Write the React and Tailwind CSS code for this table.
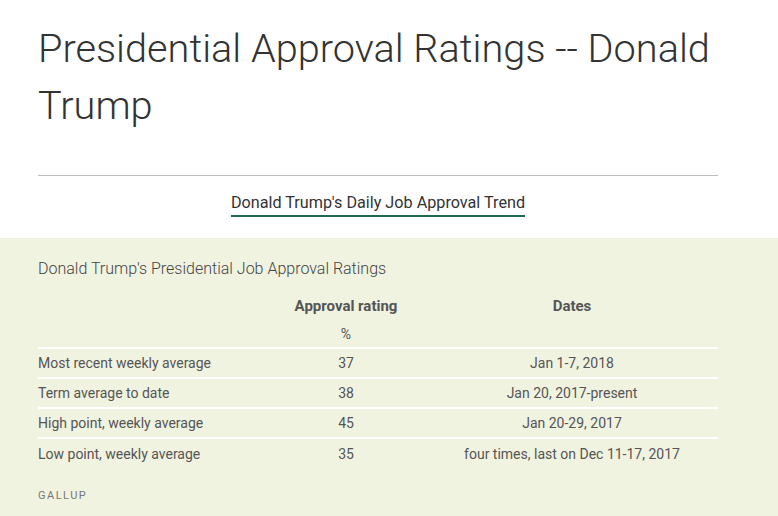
import React from "react";

const rows = [
  ["Most recent weekly average", "37", "Jan 1-7, 2018"],
  ["Term average to date", "38", "Jan 20, 2017-present"],
  ["High point, weekly average", "45", "Jan 20-29, 2017"],
  ["Low point, weekly average", "35", "four times, last on Dec 11-17, 2017"],
];

export default function App() {
  return (
    <div className="w-[778px] h-[516px] overflow-hidden bg-white font-['Roboto',sans-serif]">
      <div className="px-[38px] pt-[20px]">
        <h1 className="text-[39.7px] leading-[57px] font-light text-[#333] w-[690px]">
          Presidential Approval Ratings -- Donald Trump
        </h1>
        <div className="mt-[41px] w-[680px] border-t border-[#bdbdbd]" />
        <div className="w-[680px] flex justify-center pt-[16px]">
          <a className="text-[16.2px] leading-[22px] text-[#333] border-b-2 border-[#1d6b4c] pb-[1px]">
            Donald Trump's Daily Job Approval Trend
          </a>
        </div>
      </div>
      <div className="mt-[21px] bg-[#f1f3e1] h-[400px] px-[38px] pt-[20px]">
        <div className="text-[16px] leading-[22px] font-light text-[#444]">
          Donald Trump's Presidential Job Approval Ratings
        </div>
        <div className="w-[680px] mt-[11px] text-[14px] text-[#555]">
          <div className="grid grid-cols-[228px_160px_292px] h-[30px] items-center font-bold text-[15px]">
            <div />
            <div className="text-center">Approval rating</div>
            <div className="text-center">Dates</div>
          </div>
          <div className="grid grid-cols-[228px_160px_292px] h-[28px] items-center border-b-2 border-white">
            <div />
            <div className="text-center">%</div>
            <div />
          </div>
          {rows.map((r, i) => (
            <div
              key={i}
              className={`grid grid-cols-[228px_160px_292px] h-[30px] items-center ${i < rows.length - 1 ? "border-b-2 border-white" : ""}`}
            >
              <div>{r[0]}</div>
              <div className="text-center">{r[1]}</div>
              <div className="text-center">{r[2]}</div>
            </div>
          ))}
        </div>
        <div className="mt-[19px] text-[11px] tracking-[1.5px] text-[#777]">GALLUP</div>
      </div>
    </div>
  );
}
